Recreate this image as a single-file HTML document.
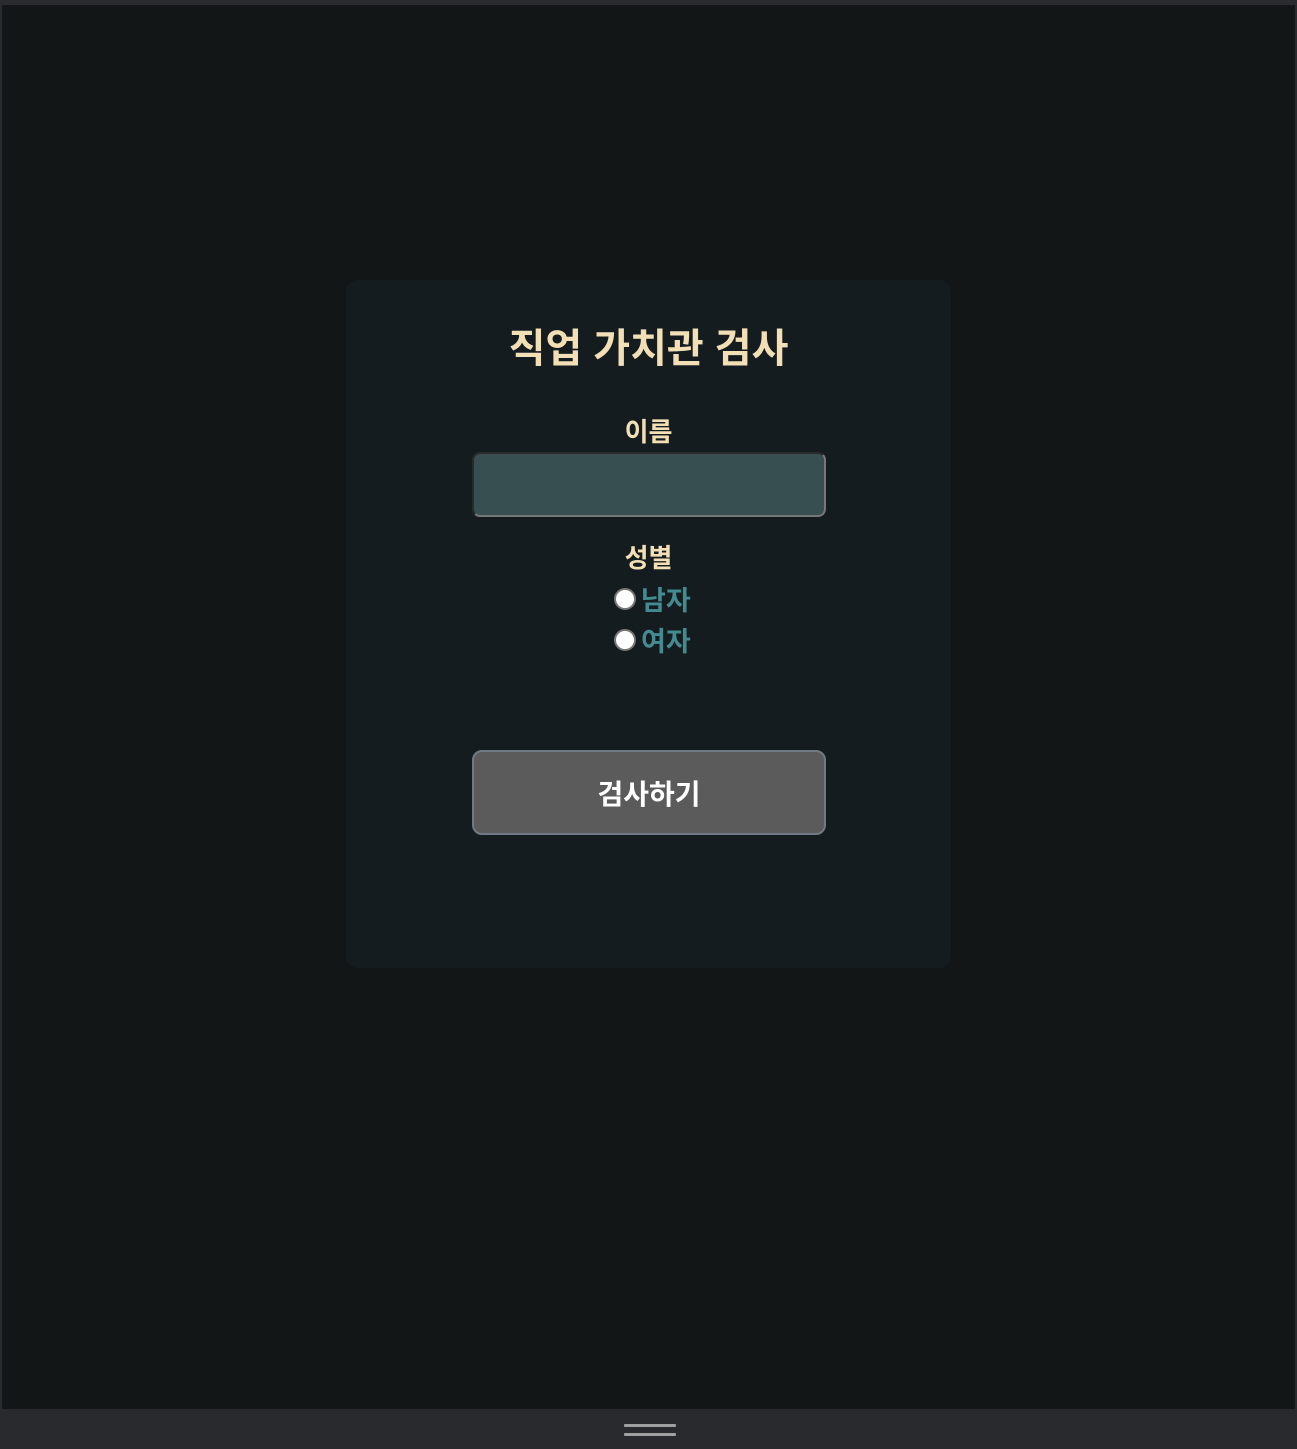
<!DOCTYPE html>
<html><head><meta charset="utf-8"><style>
*{margin:0;padding:0;box-sizing:border-box}
body{width:1297px;height:1449px;background:#131617;position:relative;overflow:hidden;font-family:"Liberation Sans","Noto Sans CJK KR","NanumGothic",sans-serif;font-weight:bold}
.top{position:absolute;left:0;top:0;width:1297px;height:5px;background:#2a2b2f}
.lb{position:absolute;left:0;top:0;width:2px;height:1449px;background:#2a2b2f}
.rb{position:absolute;right:0;top:0;width:2px;height:1449px;background:#2a2b2f}
.bot{position:absolute;left:0;top:1409px;width:1297px;height:40px;background:#292a2e}
.h{position:absolute;left:624px;width:52px;height:3px;background:#a0a0a0;border-radius:1px}
.card{position:absolute;left:346px;top:280px;width:605px;height:688px;background:#151c1f;border-radius:12px}
.c{position:absolute;left:0;width:100%;text-align:center;color:#f2dfb5}
.inp{position:absolute;left:472px;top:452px;width:354px;height:65px;background:#374f51;border-radius:8px;border:2px solid;border-color:#2a2a2a #777 #777 #2a2a2a}
.r{position:absolute;left:614px;display:flex;align-items:center;color:#438b91;font-size:27px}
.r i{display:inline-block;width:22px;height:22px;border-radius:50%;background:#fff;border:2px solid #777;margin-right:5px}
.btn{position:absolute;left:472px;top:750px;width:354px;height:85px;background:#5b5b5b;border:2px solid #707a85;border-radius:10px;color:#fff;font-size:28px;text-align:center;line-height:86px}
</style></head><body>
<div class="top"></div><div class="lb"></div><div class="rb"></div>
<div class="card"></div>
<div class="c" style="top:322px;font-size:40px;line-height:54px">직업 가치관 검사</div>
<div class="c" style="top:415px;font-size:26px;line-height:34px">이름</div>
<div class="inp"></div>
<div class="c" style="top:541px;font-size:26px;line-height:34px">성별</div>
<div class="r" style="top:579px"><i></i>남자</div>
<div class="r" style="top:620px"><i></i>여자</div>
<div class="btn">검사하기</div>
<div class="bot"></div>
<div class="h" style="top:1424px"></div><div class="h" style="top:1433px"></div>
</body></html>
